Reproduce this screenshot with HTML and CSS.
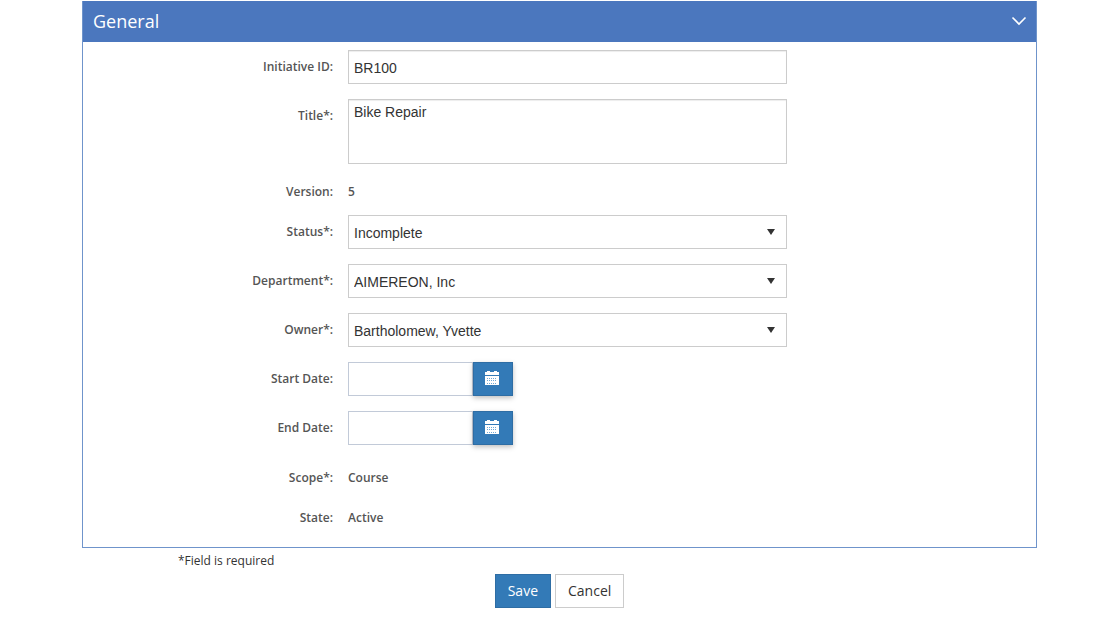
FILE: index.html
```html
<!DOCTYPE html>
<html lang="en">
<head>
  <meta charset="utf-8">
  <title>General</title>
  <link rel="stylesheet" href="styles.css">
</head>
<body>
  <form>
    <section class="panel">
      <header class="panel-heading">
        <h1>General</h1>
        <button type="button" class="collapse" aria-label="Collapse">
          <svg width="16" height="10" viewBox="0 0 16 10"><path d="M1.500 1.500L8 8l6.500-6.500" fill="none" stroke="#fff" stroke-width="1.600"/></svg>
        </button>
      </header>
      <div class="panel-body">
        <div class="form-group">
          <label for="initiativeId">Initiative ID:</label>
          <input type="text" class="form-control" id="initiativeId" value="BR100">
        </div>
        <div class="form-group form-group-area">
          <label for="title">Title*:</label>
          <textarea class="form-control" id="title">Bike Repair</textarea>
        </div>
        <div class="form-group">
          <span class="label">Version:</span>
          <span class="static">5</span>
        </div>
        <div class="form-group">
          <label for="status">Status*:</label>
          <div class="select">
            <select class="form-control" id="status"><option>Incomplete</option></select>
          </div>
        </div>
        <div class="form-group">
          <label for="department">Department*:</label>
          <div class="select">
            <select class="form-control" id="department"><option>AIMEREON, Inc</option></select>
          </div>
        </div>
        <div class="form-group">
          <label for="owner">Owner*:</label>
          <div class="select">
            <select class="form-control" id="owner"><option>Bartholomew, Yvette</option></select>
          </div>
        </div>
        <div class="form-group">
          <label for="startDate">Start Date:</label>
          <div class="date">
            <input type="text" class="form-control" id="startDate">
            <button type="button" class="date-button" aria-label="Pick start date">
              <svg width="14" height="14" viewBox="0 0 14 14" shape-rendering="crispEdges"><path d="M1 1h1V0h3v1h4V0h3v1h2v3H0V1zM0 5h14v9H0z" fill="#fff"/><path d="M2 7.500h10M2 9.500h10M2 12.500h10" stroke="#6fa8d6" stroke-dasharray="1 1"/></svg>
            </button>
          </div>
        </div>
        <div class="form-group">
          <label for="endDate">End Date:</label>
          <div class="date">
            <input type="text" class="form-control" id="endDate">
            <button type="button" class="date-button" aria-label="Pick end date">
              <svg width="14" height="14" viewBox="0 0 14 14" shape-rendering="crispEdges"><path d="M1 1h1V0h3v1h4V0h3v1h2v3H0V1zM0 5h14v9H0z" fill="#fff"/><path d="M2 7.500h10M2 9.500h10M2 12.500h10" stroke="#6fa8d6" stroke-dasharray="1 1"/></svg>
            </button>
          </div>
        </div>
        <div class="form-group form-group-scope">
          <span class="label">Scope*:</span>
          <span class="static">Course</span>
        </div>
        <div class="form-group">
          <span class="label">State:</span>
          <span class="static">Active</span>
        </div>
      </div>
    </section>
    <p class="note">*Field is required</p>
    <div class="actions">
      <button type="submit" class="btn btn-primary">Save</button>
      <button type="button" class="btn">Cancel</button>
    </div>
  </form>
</body>
</html>
```
FILE: styles.css
```css
* {
  box-sizing: border-box;
}

body {
  margin: 0;
  padding: 1px 83px 16px 82px;
  background-color: #fff;
  color: #333;
  font-family: "Open Sans", sans-serif;
  font-size: 12px;
  line-height: 18px;
}

button {
  font-family: inherit;
  cursor: pointer;
}

svg {
  display: block;
}

.panel {
  border: 1px solid #6f94cb;
}

.panel-heading {
  display: flex;
  align-items: center;
  justify-content: space-between;
  height: 41px;
  margin: -1px 0 0;
  padding: 0 9px 1px 10px;
  background-color: #4b77be;
  color: #fff;
}

.panel-heading h1 {
  margin: 0;
  font-size: 18px;
  font-weight: 400;
  line-height: 24px;
}

.collapse {
  padding: 0;
  border: none;
  background: none;
}

.panel-body {
  padding: 8px 0 6px;
}

.form-group {
  display: grid;
  grid-template-columns: 250px minmax(0, 439px);
  column-gap: 15px;
  align-items: start;
  margin-bottom: 15px;
}

.form-group-area {
  margin-bottom: 11px;
}

.form-group-scope {
  margin-top: 16px;
}

.form-group label,
.label,
.static {
  padding-top: 9px;
  color: #555;
  font-weight: 600;
  line-height: 16px;
}

.form-group label,
.label {
  text-align: right;
}

.form-control {
  display: block;
  width: 100%;
  height: 34px;
  margin: 0;
  padding: 3px 5px 1px;
  border: 1px solid #ccc;
  border-radius: 0;
  background-color: #fff;
  box-shadow: inset 0 1px 1px rgba(0, 0, 0, 0.075);
  color: #333;
  font-family: "Liberation Sans", Arial, sans-serif;
  font-size: 14px;
  line-height: 20px;
}

textarea.form-control {
  height: 65px;
  padding: 2px 5px;
  resize: none;
}

.select {
  position: relative;
}

.select::after {
  content: "";
  position: absolute;
  top: 14px;
  right: 12px;
  border: 4px solid transparent;
  border-top: 6px solid #333;
  border-bottom: none;
  pointer-events: none;
}

select.form-control {
  appearance: none;
  box-shadow: none;
}

.date {
  display: flex;
}

.date .form-control {
  width: 125px;
  border-color: #c2cad8;
  box-shadow: none;
}

.date-button {
  display: flex;
  justify-content: center;
  width: 40px;
  height: 34px;
  padding: 8px 2px 0 0;
  border: 1px solid #2e6da4;
  background-color: #337ab7;
  box-shadow: 0 2px 5px rgba(0, 0, 0, 0.25);
}

.note {
  margin: 4px 0;
  padding-left: 96px;
}

.actions {
  display: flex;
  justify-content: center;
  gap: 4px;
}

.btn {
  height: 34px;
  padding: 0 12px;
  border: 1px solid #ccc;
  background-color: #fff;
  color: #333;
  font-size: 14px;
  line-height: 20px;
}

.btn-primary {
  border-color: #2e6da4;
  background-color: #337ab7;
  color: #fff;
}
```
